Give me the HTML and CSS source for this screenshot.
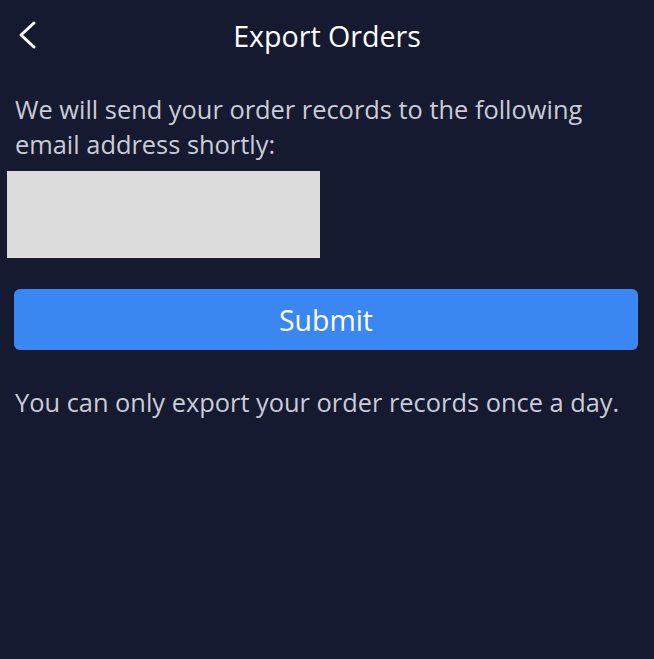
FILE: index.html
```html
<!DOCTYPE html>
<html>
    <head>
    <meta charset="utf-8">
    <title>Export Orders</title>
    <link rel="stylesheet" href="styles.css">
    </head>
    <body>
        <div class="header">
            <a class="back" href="#">
                <svg width="24" height="30" viewBox="0 0 24 30">
                    <path d="M18 3 L5 15 L18 27" fill="none" stroke="#ffffff" stroke-width="3" stroke-linecap="round" stroke-linejoin="round"/>
                </svg>
            </a>
            <div class="title">Export Orders</div>
        </div>

        <div class="content">
            <p class="intro">We will send your order records to the following email address shortly:</p>
            <div class="email-box"></div>

            <button class="submit" type="button">Submit</button>

            <p class="note">You can only export your order records once a day.</p>
        </div>
    </body>
</html>
```

FILE: styles.css
```css
html, body {
    margin: 0;
    padding: 0;
    height: 100%;
    background-color: #161a30;
    font-family: "Open Sans", "Noto Sans", sans-serif;
    color: #c9ccd8;
}

.header {
    height: 72px;
    display: flex;
    align-items: center;
    justify-content: center;
    position: relative;
}

.back {
    position: absolute;
    left: 16px;
    top: 20px;
    display: block;
    line-height: 0;
}

.title {
    color: #ffffff;
    font-size: 28.6px;
    margin-top: -2px;
}

.content {
    padding: 20px 16px 0 15px;
}

.intro {
    margin: 0;
    font-size: 25.4px;
    line-height: 35px;
}

.email-box {
    width: 313px;
    height: 87px;
    margin: 9px 0 0 -8px;
    background-color: #dcdcdc;
}

.submit {
    display: block;
    width: 624px;
    height: 61px;
    margin: 31px 0 0 -1px;
    border: none;
    border-radius: 6px;
    background-color: #3b87f1;
    color: #ffffff;
    font-family: "Open Sans", "Noto Sans", sans-serif;
    font-size: 28.4px;
    cursor: pointer;
}

.note {
    margin: 34px 0 0 0;
    font-size: 25.4px;
    line-height: 36px;
}
```
